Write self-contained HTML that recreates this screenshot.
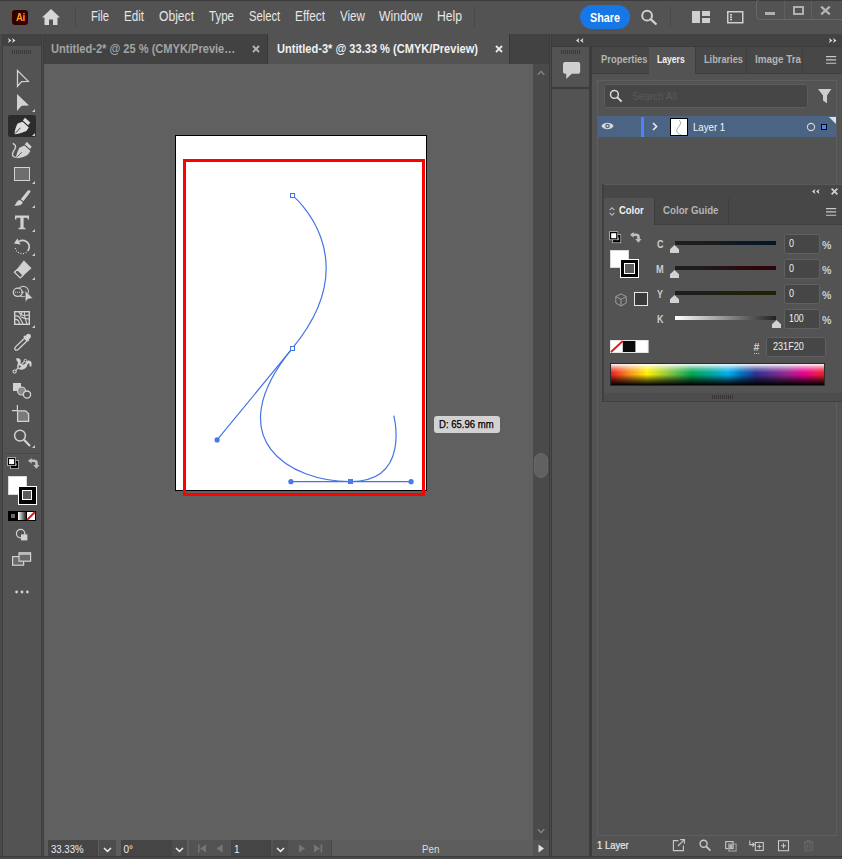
<!DOCTYPE html>
<html>
<head>
<meta charset="utf-8">
<title>Adobe Illustrator</title>
<style>
*{box-sizing:border-box;margin:0;padding:0}
html,body{width:842px;height:859px;overflow:hidden;background:#535353}
body{font-family:"Liberation Sans",sans-serif;font-size:12px;color:#dcdcdc;position:relative}
.abs{position:absolute}
svg{position:absolute;overflow:visible}
#menubar{left:0;top:0;width:842px;height:34px;background:#535353}
.menu{position:absolute;top:8px;font-size:14px;line-height:16px;color:#e6e6e6;white-space:nowrap;transform-origin:0 50%;display:inline-block}
.tab{position:absolute;top:0;height:30px}
.tabt{position:absolute;top:42px;font-size:12.5px;line-height:14px;font-weight:bold;white-space:nowrap;transform-origin:0 50%;transform:scaleX(.886)}
.ptab{position:absolute;font-size:10px;line-height:12px;font-weight:bold;color:#b4b4b4;white-space:nowrap;transform-origin:0 50%}
.lbl{position:absolute;font-size:10px;line-height:12px;font-weight:bold;color:#cdcdcd;white-space:nowrap;transform-origin:0 50%}
.vbox{position:absolute;background:#464646;border:1px solid #616161;border-radius:2.5px}
.vt{position:absolute;left:4px;top:3.5px;font-size:10px;line-height:12px;color:#f0f0f0;white-space:nowrap;transform-origin:0 50%;display:inline-block}
.sfield{position:absolute;top:840px;height:16px;background:#454545;white-space:nowrap}
.st{position:absolute;left:3px;top:3.6px;font-size:10px;line-height:12px;color:#ececec;transform-origin:0 50%;display:inline-block}
.tri{position:absolute;width:0;height:0;margin:0.5px 0 0 0.5px;border-left:3.5px solid transparent;border-bottom:3.5px solid #cfcfcf}
</style>
</head>
<body>
<!-- ================= MENUBAR ================= -->
<div id="menubar" class="abs">
  <div class="abs" style="left:0;top:0;width:842px;height:1px;background:#3c3c3c"></div>
  <div class="abs" style="left:12.3px;top:10px;width:16px;height:14.6px;background:#330000;border-radius:3px"></div>
  <div class="abs" style="left:15.8px;top:11.9px;font-size:10px;font-weight:bold;color:#ff9f1a;letter-spacing:-0.2px;line-height:12px;transform-origin:0 50%;transform:scaleX(.94)">Ai</div>
  <svg style="left:41px;top:8px" width="20" height="18" viewBox="0 0 20 18"><path d="M10 1 L1 9.5 H3.5 V17 H8 V11.5 H12 V17 H16.5 V9.5 H19 Z" fill="#d6d6d6"/></svg>
  <div class="abs" style="left:75px;top:7px;width:1px;height:20px;background:#484848"></div>
  <span class="menu" style="left:91px;transform:scaleX(0.8)">File</span>
  <span class="menu" style="left:124px;transform:scaleX(0.83)">Edit</span>
  <span class="menu" style="left:159px;transform:scaleX(0.865)">Object</span>
  <span class="menu" style="left:209px;transform:scaleX(0.825)">Type</span>
  <span class="menu" style="left:249px;transform:scaleX(0.8)">Select</span>
  <span class="menu" style="left:295px;transform:scaleX(0.845)">Effect</span>
  <span class="menu" style="left:340px;transform:scaleX(0.83)">View</span>
  <span class="menu" style="left:379px;transform:scaleX(0.87)">Window</span>
  <span class="menu" style="left:437px;transform:scaleX(0.87)">Help</span>
  <div class="abs" style="left:474px;top:7px;width:1px;height:20px;background:#484848"></div>
  <!-- share -->
  <div class="abs" style="left:580px;top:5px;width:50px;height:24px;border-radius:12px;background:#1877e6"></div><span class="menu" style="left:589.6px;top:9.5px;font-size:13.5px;font-weight:bold;color:#fff;transform:scaleX(.80)">Share</span>
  <svg style="left:639px;top:8px" width="20" height="20" viewBox="0 0 20 20"><circle cx="8.1" cy="7.7" r="4.9" fill="none" stroke="#cfcfcf" stroke-width="2"/><path d="M11.6 11.2 L16.8 15.8" stroke="#cfcfcf" stroke-width="2.3" stroke-linecap="round"/></svg>
  <div class="abs" style="left:670px;top:7px;width:1px;height:20px;background:#484848"></div>
  <!-- arrange docs icon -->
  <svg style="left:692px;top:11px" width="18" height="13" viewBox="0 0 18 13"><rect x="0" y="0" width="8" height="12" fill="#cfcfcf"/><rect x="10" y="0" width="8" height="5" fill="#cfcfcf"/><rect x="10" y="7" width="8" height="5" fill="#cfcfcf"/></svg>
  <!-- workspace icon -->
  <svg style="left:727px;top:11px" width="17" height="13" viewBox="0 0 17 13"><rect x="0.75" y="0.75" width="15" height="11" fill="none" stroke="#cfcfcf" stroke-width="1.5"/><rect x="3" y="3" width="2" height="1.6" fill="#cfcfcf"/><rect x="3" y="5.4" width="2" height="1.6" fill="#cfcfcf"/><rect x="3" y="7.8" width="2" height="1.6" fill="#cfcfcf"/></svg>
  <!-- window controls -->
  <div class="abs" style="left:756px;top:-1px;width:90px;height:21px;border:1px solid #676767;border-radius:4px"></div><div class="abs" style="left:784px;top:1px;width:1px;height:18px;background:#606060"></div><div class="abs" style="left:811px;top:1px;width:1px;height:18px;background:#606060"></div>
  <div class="abs" style="left:765px;top:12px;width:10px;height:3px;background:#b0b0b0"></div>
  <div class="abs" style="left:793px;top:6px;width:11px;height:9px;border:2px solid #b0b0b0"></div>
  <svg style="left:820px;top:6px" width="11" height="9" viewBox="0 0 11 9"><path d="M1.2 0.6 L9.8 8.4 M9.8 0.6 L1.2 8.4" stroke="#b4b4b4" stroke-width="2.2"/></svg>
</div>

<!-- ================= TOOLBAR ================= -->
<div class="abs" style="left:0;top:34px;width:3px;height:825px;background:#4a4a4a"></div>
<div class="abs" style="left:2px;top:34px;width:1px;height:825px;background:#3e3e3e"></div>
<div class="abs" style="left:3px;top:34px;width:39px;height:12px;background:#424242"></div>
<div class="abs" style="left:41px;top:34px;width:3px;height:825px;background:#3e3e3e"></div>
<div class="abs" style="left:42px;top:34px;width:1px;height:825px;background:#4a4a4a"></div>
<!-- >> -->
<svg style="left:7.7px;top:38.2px" width="7.5" height="5" viewBox="0 0 7.5 5"><path d="M0 0 L3.4 2.5 L0 5 L0.9 2.5 Z M4.1 0 L7.5 2.5 L4.1 5 L5 2.5 Z" fill="#e0e0e0"/></svg>
<!-- grip -->
<div class="abs" style="left:12px;top:50px;width:19px;height:4px;background:repeating-linear-gradient(90deg,#3a3a3a 0,#3a3a3a 1px,transparent 1px,transparent 2px)"></div>

<!-- selection tool -->
<svg style="left:10px;top:66px" width="24" height="24" viewBox="0 0 24 24"><path d="M7.5 4.5 L7.5 20.2 L11.6 15.6 L18.3 15.3 Z" fill="none" stroke="#d2d2d2" stroke-width="1.3" stroke-linejoin="miter"/></svg>
<!-- direct selection -->
<svg style="left:10px;top:90px" width="24" height="24" viewBox="0 0 24 24"><path d="M7 4 L7 21 L11.6 15.8 L19 15.4 Z" fill="#d2d2d2"/></svg>
<div class="tri" style="left:31px;top:108px"></div>
<!-- pen (active) -->
<div class="abs" style="left:8px;top:115px;width:28px;height:22px;background:#2c2c2c;border-radius:2px"></div>
<svg style="left:10px;top:114px" width="24" height="24" viewBox="0 0 24 24"><g fill="#dedede"><path d="M4.5 19.4 C4.9 16 6 12 7.6 9.4 L12.6 7.7 L18.8 13.4 L16.4 17 C13 18.6 9 19.8 5.4 20.2 Z"/><path d="M15 3.8 L20.3 8.6 L18.1 11.3 L12.9 6.5 Z"/></g><path d="M5.2 19.4 L10.4 13.8" stroke="#2c2c2c" stroke-width="0.9"/></svg>
<div class="tri" style="left:31px;top:132px"></div>
<!-- curvature -->
<svg style="left:10px;top:138px" width="24" height="24" viewBox="0 0 24 24"><g fill="#d2d2d2"><path d="M5.9 19.6 C6.6 16 7.8 12.4 9.4 9.7 L14.4 7.5 L20.5 12.9 L17.8 16.7 C15 18.4 11.6 19.6 7.2 20.2 Z"/><path d="M16.9 3.9 L21.7 8.7 L20 11 L14.7 6.2 Z"/></g><path d="M6.8 19.4 L11.8 14.2" stroke="#535353" stroke-width="0.9"/><path d="M2.8 5.3 C4.5 6.3 5.8 7 5.6 9 C5 12 2 14 2.5 17 C2.8 18.6 4 19.2 5.8 19.4" fill="none" stroke="#d2d2d2" stroke-width="1.3"/></svg>
<!-- rectangle -->
<div class="abs" style="left:14px;top:167px;width:16px;height:14px;border:1.5px solid #d2d2d2;background:#6e6e6e"></div>
<div class="tri" style="left:31px;top:180px"></div>
<!-- paintbrush -->
<svg style="left:10px;top:186px" width="24" height="24" viewBox="0 0 24 24"><path d="M19.4 4.2 C20.6 4.4 20.6 5.6 20 6.6 L13.4 15.2 L10.8 13.2 L17.6 4.8 C18.2 4.2 18.8 4 19.4 4.2 Z" fill="#d2d2d2"/><path d="M10 14 L12.6 16 C12.6 18.6 10.6 19.8 4 19.8 C6.4 18.6 6 14.6 10 14 Z" fill="#d2d2d2"/></svg>
<div class="tri" style="left:31px;top:204px"></div>
<!-- type -->
<svg style="left:10px;top:210px" width="24" height="24" viewBox="0 0 24 24"><path d="M5 5.6 H19 V9.4 H17.6 V7.8 H13.6 V17.8 H15.4 V19.2 H8.6 V17.8 H10.4 V7.8 H6.4 V9.4 H5 Z" fill="#d2d2d2"/></svg>
<div class="tri" style="left:31px;top:228px"></div>
<!-- rotate -->
<svg style="left:10px;top:234px" width="24" height="24" viewBox="0 0 24 24"><path d="M9 7.4 C14 4.6 19.6 8.4 19.2 13.2 C19 15 18.4 16.2 17.6 17" fill="none" stroke="#d2d2d2" stroke-width="1.6"/><path d="M4 9.6 L7.4 4.4 L10.6 10.6 Z" fill="#d2d2d2"/><path d="M5.4 14 C6 18 10 20.4 14 19.4 C15.4 19 16.4 18.4 17.2 17.6" fill="none" stroke="#d2d2d2" stroke-width="1.2" stroke-dasharray="1 1.6"/></svg>
<div class="tri" style="left:31px;top:252px"></div>
<!-- eraser -->
<svg style="left:10px;top:258px" width="24" height="24" viewBox="0 0 24 24"><path d="M13.9 2.7 L21.2 10.2 L13.3 17.3 L7.2 11.2 Z" fill="#d2d2d2" stroke="#d2d2d2" stroke-width="0.6" stroke-linejoin="round"/><path d="M7.3 11.4 L13.1 17.2 L10.2 19.9 L4.4 14.3 Z" fill="none" stroke="#d2d2d2" stroke-width="1.3" stroke-linejoin="round"/></svg>
<div class="tri" style="left:31px;top:276px"></div>
<!-- retype/touch type: bubble + arrow -->
<svg style="left:10px;top:282px" width="24" height="24" viewBox="0 0 24 24"><ellipse cx="13.2" cy="9.6" rx="5.3" ry="5.2" fill="none" stroke="#c4c4c4" stroke-width="1.1"/><ellipse cx="7.8" cy="10.3" rx="4.5" ry="4.1" fill="#535353" stroke="#d2d2d2" stroke-width="1.3"/><path d="M4.8 10.3 H14.4" stroke="#d8d8d8" stroke-width="1.1" stroke-dasharray="1 1.1"/><path d="M15.2 8.4 V20.4 L18 17.1 L23 16.4 Z" fill="#d2d2d2" stroke="#535353" stroke-width="0.7"/></svg>
<!-- mesh -->
<svg style="left:10px;top:307px" width="24" height="24" viewBox="0 0 24 24"><rect x="4.7" y="4.7" width="14.6" height="12.6" fill="none" stroke="#d2d2d2" stroke-width="1.4"/><g fill="none" stroke="#d2d2d2" stroke-width="1.1"><path d="M5 9 C9 8 10 11 13 17"/><path d="M5 12.4 C8 12 9 14 9.6 17"/><path d="M9 5 C10 8 14 9 19 8"/><path d="M14.6 5 C13.6 9 16 13 17 17"/><path d="M11 10 C14 11 16 12 19 12"/><path d="M12 5 C11.6 7 11 8.6 10 9.6"/></g></svg>
<div class="tri" style="left:31px;top:324px"></div>
<!-- eyedropper -->
<svg style="left:10px;top:330px" width="24" height="24" viewBox="0 0 24 24"><path d="M14.6 8.2 L17.2 10.8 L8.8 19 C7.6 20 6 20.4 5.2 19.7 C4.4 18.8 5 17.4 6 16.4 Z" fill="none" stroke="#d2d2d2" stroke-width="1.3"/><path d="M13.2 6.8 L14.6 5.6 L15.4 6.2 C16 4.2 18.6 2.8 20.2 4.4 C21.8 6 20.6 8.4 18.6 9.2 L19.4 10.2 L18 11.6 Z" fill="#d2d2d2"/></svg>
<!-- symbol sprayer -->
<svg style="left:10px;top:354px" width="24" height="24" viewBox="0 0 24 24"><path d="M6 4.6 C9.6 3 11.8 6 10.4 9.4 C12.4 11.6 15 10.6 16 8.4 C17.6 5.4 21.6 6.4 21.6 9.8 L21.4 12.6 L19.6 12.4 L19.4 10 C18.8 9.2 17.8 9.6 17.6 10.6 C16.6 14.6 13.6 16.4 10 15.6 C7.6 15 6.6 13 7.4 11 C8 9.4 8.4 7.8 6.8 7 Z" fill="#d2d2d2"/><path d="M4.6 17.6 L15.4 6.4" stroke="#d2d2d2" stroke-width="1.2"/><circle cx="4.6" cy="17.6" r="1.6" fill="#535353" stroke="#d2d2d2" stroke-width="1.1"/><circle cx="15.4" cy="6.6" r="1.3" fill="#535353" stroke="#d2d2d2" stroke-width="1"/><circle cx="9.6" cy="12.6" r="1.6" fill="#535353" stroke="#d2d2d2" stroke-width="1"/></svg>
<!-- shape builder -->
<svg style="left:10px;top:378px" width="24" height="24" viewBox="0 0 24 24"><rect x="3" y="5" width="8" height="8" fill="#d2d2d2"/><circle cx="11.6" cy="13" r="4" fill="#8a8a8a" stroke="#d2d2d2" stroke-width="1.2"/><circle cx="17" cy="16.6" r="3.6" fill="#535353" stroke="#d2d2d2" stroke-width="1.3"/></svg>
<!-- artboard -->
<svg style="left:10px;top:402px" width="24" height="24" viewBox="0 0 24 24"><path d="M7.4 3 V8.6 M2 8.6 H7.4" stroke="#d2d2d2" stroke-width="1.2" fill="none"/><path d="M7.6 8.8 H15.6 L18.6 11.8 V19.4 H7.6 Z" fill="#7a7a7a" stroke="#d2d2d2" stroke-width="1.3"/></svg>
<!-- zoom -->
<svg style="left:10px;top:426px" width="24" height="24" viewBox="0 0 24 24"><circle cx="10" cy="9.6" r="5.4" fill="none" stroke="#d2d2d2" stroke-width="1.5"/><path d="M14 13.8 L20 20" stroke="#d2d2d2" stroke-width="2.2"/></svg>
<div class="tri" style="left:31px;top:444px"></div>
<!-- separator -->
<div class="abs" style="left:6px;top:453px;width:33px;height:1px;background:#474747"></div>
<!-- default fill/stroke -->
<svg style="left:6px;top:456px" width="14" height="14" viewBox="6 456 14 14">
  <rect x="10.1" y="460.1" width="8.8" height="8.8" fill="#c8c8c8"/>
  <rect x="10.8" y="460.8" width="7.4" height="7.4" fill="#000"/>
  <path d="M15.4 465.6 H16 V463.4" fill="none" stroke="#fff" stroke-width="0.9"/>
  <rect x="7.3" y="457.3" width="8.6" height="8.6" fill="#c8c8c8"/>
  <rect x="8" y="458" width="7.2" height="7.2" fill="#000"/>
  <rect x="9.1" y="459.1" width="5" height="5" fill="#fff"/>
</svg>
<!-- swap -->
<svg style="left:27.6px;top:458px" width="12" height="11" viewBox="0 0 12 11"><path d="M0 2.8 L3.6 0 V1.6 H6 C8.6 1.6 9.8 3 9.8 5 V7 H11.6 L8.4 10.8 L5.2 7 H7.2 V5.2 C7.2 4.4 6.8 4 6 4 H3.6 V5.8 Z" fill="#bdbdbd"/></svg>
<!-- fill / stroke -->
<div class="abs" style="left:7.5px;top:475.5px;width:19px;height:19px;background:#fff;border:1px solid #d8d8d8"></div>
<div class="abs" style="left:17.5px;top:485.5px;width:19px;height:19px;background:#fff"></div>
<div class="abs" style="left:18.5px;top:486.5px;width:17px;height:17px;background:#000"></div>
<div class="abs" style="left:22px;top:490px;width:10px;height:10px;background:#fff"></div>
<div class="abs" style="left:23px;top:491px;width:8px;height:8px;background:#5c5c5c"></div>
<!-- color / gradient / none -->
<div class="abs" style="left:8px;top:511px;width:28px;height:10px;background:#000"></div>
<div class="abs" style="left:11px;top:514px;width:4px;height:4px;background:#6a6a6a"></div>
<div class="abs" style="left:18px;top:512px;width:8px;height:8px;background:linear-gradient(90deg,#fff,#222)"></div>
<svg style="left:27px;top:512px" width="8" height="8" viewBox="0 0 8 8"><rect width="8" height="8" fill="#fff"/><path d="M0 8 L8 0" stroke="#e8131a" stroke-width="2"/></svg>
<!-- draw mode -->
<svg style="left:14px;top:527px" width="16" height="16" viewBox="0 0 16 16"><circle cx="6.6" cy="6.6" r="4.2" fill="none" stroke="#d2d2d2" stroke-width="1.2"/><rect x="7" y="7.4" width="6.4" height="6" fill="#d2d2d2"/></svg>
<!-- screen mode -->
<svg style="left:12px;top:552px" width="20" height="14" viewBox="0 0 20 14"><rect x="0.6" y="4.6" width="11" height="8.6" fill="#6a6a6a" stroke="#d2d2d2" stroke-width="1.2"/><rect x="7" y="0.8" width="11.6" height="8.4" fill="#6a6a6a" stroke="#d2d2d2" stroke-width="1.2"/><path d="M7 2 H18.6" stroke="#d2d2d2" stroke-width="1.4"/></svg>
<!-- more -->
<svg style="left:15px;top:590px" width="14" height="4" viewBox="0 0 14 4"><circle cx="1.6" cy="2" r="1.4" fill="#d2d2d2"/><circle cx="7" cy="2" r="1.4" fill="#d2d2d2"/><circle cx="12.4" cy="2" r="1.4" fill="#d2d2d2"/></svg>

<!-- ================= TABBAR ================= -->
<div class="abs" style="left:44px;top:34px;width:505px;height:30px;background:#424242"></div>
<div class="tabt" style="left:51px;color:#a2a2a2">Untitled-2* @ 25 % (CMYK/Previe…</div>
<svg style="left:252px;top:45px" width="8" height="8" viewBox="0 0 8 8"><path d="M1 1 L7 7 M7 1 L1 7" stroke="#b8b8b8" stroke-width="1.8"/></svg>
<div class="abs" style="left:267px;top:34px;width:1px;height:30px;background:#383838"></div>
<div class="tab" style="left:268px;top:34px;width:241px;background:#535353"></div><div class="tabt" style="left:276.5px;color:#f0f0f0">Untitled-3* @ 33.33 % (CMYK/Preview)</div>
<svg style="left:495px;top:45px" width="8" height="8" viewBox="0 0 8 8"><path d="M1 1 L7 7 M7 1 L1 7" stroke="#e8e8e8" stroke-width="1.8"/></svg>
<div class="abs" style="left:509px;top:34px;width:1px;height:30px;background:#383838"></div>

<!-- ================= CANVAS ================= -->
<div class="abs" style="left:44px;top:64px;width:489px;height:776px;background:#606060"></div>
<!-- artboard -->
<div class="abs" style="left:175px;top:135px;width:252px;height:356px;background:#fff;border:1px solid #000"></div>
<svg style="left:0;top:0" width="842" height="859" viewBox="0 0 842 859">
  <rect x="184.5" y="160.5" width="239" height="334" fill="none" stroke="#ff0000" stroke-width="3"/>
  <g fill="none" stroke="#4274e6" stroke-width="1.2">
    <path d="M292.6,195.6 C292.6,195.6 367.9,256.5 292.5,348.2 C217.1,439.9 290.9,481.9 350.5,481.6 C411.1,481.9 393.8,415.6 393.8,415.6"/>
    <path d="M292.5,348.2 L217.1,439.9"/>
    <path d="M290.9,481.6 H411.1"/>
  </g>
  <rect x="290.5" y="193.5" width="4" height="4" fill="#fff" stroke="#4274e6" stroke-width="1"/>
  <rect x="290.5" y="346.5" width="4" height="4" fill="#fff" stroke="#4274e6" stroke-width="1"/>
  <rect x="348" y="479" width="5" height="5" fill="#457af0"/>
  <circle cx="217.1" cy="439.9" r="2.6" fill="#457af0"/>
  <circle cx="290.9" cy="481.7" r="2.6" fill="#457af0"/>
  <circle cx="411.1" cy="481.7" r="2.6" fill="#457af0"/>
</svg>
<!-- measurement tooltip -->
<div class="abs" style="left:434px;top:416px;width:66px;height:17px;background:#d2d2d2;border-radius:3px"></div><div class="abs" style="left:439px;top:418.5px;color:#000;font-size:10px;line-height:12px;white-space:nowrap;-webkit-text-stroke:0.25px #000;transform-origin:0 50%;transform:scaleX(.955)">D: 65.96 mm</div>

<!-- vertical scrollbar -->
<div class="abs" style="left:533px;top:64px;width:16px;height:776px;background:#4a4a4a"></div>
<svg style="left:537px;top:70px" width="9" height="6" viewBox="0 0 10 6"><path d="M0.8 5 L4.5 1.2 L8.2 5" fill="none" stroke="#8e8e8e" stroke-width="1.3"/></svg>
<svg style="left:537px;top:828px" width="9" height="6" viewBox="0 0 10 6"><path d="M0.8 1 L4.5 4.8 L8.2 1" fill="none" stroke="#8e8e8e" stroke-width="1.3"/></svg>
<div class="abs" style="left:534.3px;top:452.8px;width:14.2px;height:25.2px;border-radius:7px;background:#616161;border:1px solid #696969"></div>
<div class="abs" style="left:549px;top:34px;width:3px;height:825px;background:#3c3c3c"></div><div class="abs" style="left:550px;top:34px;width:1px;height:825px;background:#4a4a4a"></div>

<!-- ================= STATUS BAR ================= -->
<div class="abs" style="left:44px;top:840px;width:505px;height:16px;background:#5d5d5d"></div>
<div class="abs" style="left:189px;top:840px;width:142px;height:16px;background:#535353"></div>
<div class="sfield" style="left:48px;width:50px"><span class="st" style="transform:scaleX(.96)">33.33%</span></div>
<div class="sfield" style="left:98.5px;width:17px;background:#4d4d4d"></div>
<svg style="left:102.5px;top:847px" width="9" height="6" viewBox="0 0 9 6"><path d="M1 1 L4.5 4.4 L8 1" fill="none" stroke="#e8e8e8" stroke-width="1.5"/></svg>
<div class="sfield" style="left:120.5px;width:51px"><span class="st">0°</span></div>
<div class="sfield" style="left:172px;width:15px;background:#4d4d4d"></div>
<svg style="left:175px;top:847px" width="9" height="6" viewBox="0 0 9 6"><path d="M1 1 L4.5 4.4 L8 1" fill="none" stroke="#e8e8e8" stroke-width="1.5"/></svg>
<svg style="left:197px;top:844px" width="30" height="9" viewBox="0 0 30 9"><g fill="#757575"><rect x="1" y="0.5" width="1.6" height="8"/><path d="M9 0.5 V8.5 L3 4.5 Z"/><path d="M25.6 0.5 V8.5 L19.4 4.5 Z"/></g></svg>
<div class="sfield" style="left:231px;width:40px"><span class="st">1</span></div>
<div class="sfield" style="left:272.5px;width:15.5px;background:#4d4d4d"></div>
<svg style="left:276px;top:847px" width="9" height="6" viewBox="0 0 9 6"><path d="M1 1 L4.5 4.4 L8 1" fill="none" stroke="#e8e8e8" stroke-width="1.5"/></svg>
<svg style="left:298px;top:844px" width="30" height="9" viewBox="0 0 30 9"><g fill="#757575"><path d="M1 0.5 V8.5 L7 4.5 Z"/><path d="M16 0.5 V8.5 L22 4.5 Z"/><rect x="22.6" y="0.5" width="1.6" height="8"/></g></svg>
<div class="abs" style="left:331px;top:840px;width:1px;height:16px;background:#484848"></div>
<div class="abs" style="left:422px;top:843.6px;font-size:10px;line-height:12px;color:#dcdcdc;transform-origin:0 50%;transform:scaleX(.98)">Pen</div>
<div class="abs" style="left:533px;top:840px;width:16px;height:16px;background:#535353"></div>
<svg style="left:538px;top:844px" width="6" height="9" viewBox="0 0 6 9"><path d="M0.5 0.5 V8.5 L6 4.5 Z" fill="#e0e0e0"/></svg>
<!-- ================= RIGHT DOCK ================= -->
<div class="abs" style="left:552px;top:34px;width:290px;height:12px;background:#424242"></div>
<svg style="left:575.8px;top:38px" width="7.5" height="5" viewBox="0 0 7.5 5"><path d="M3.4 0 L0 2.5 L3.4 5 L2.5 2.5 Z M7.5 0 L4.1 2.5 L7.5 5 L6.6 2.5 Z" fill="#e0e0e0"/></svg>
<svg style="left:829px;top:38px" width="7.5" height="5" viewBox="0 0 7.5 5"><path d="M0 0 L3.4 2.5 L0 5 L0.9 2.5 Z M4.1 0 L7.5 2.5 L4.1 5 L5 2.5 Z" fill="#e0e0e0"/></svg>
<!-- collapsed column -->
<div class="abs" style="left:552px;top:46px;width:37px;height:813px;background:#535353"></div><div class="abs" style="left:552px;top:46px;width:290px;height:1px;background:#3c3c3c"></div>
<div class="abs" style="left:561px;top:50px;width:19px;height:4px;background:repeating-linear-gradient(90deg,#3a3a3a 0,#3a3a3a 1px,transparent 1px,transparent 2px)"></div>
<svg style="left:563px;top:61.7px" width="17.2" height="17.2" viewBox="0 0 17.2 17.2"><path d="M2 0 H15.2 Q17.2 0 17.2 2 V9.8 Q17.2 11.8 15.2 11.8 H8.8 L3.2 17.1 V11.8 H2 Q0 11.8 0 9.8 V2 Q0 0 2 0 Z" fill="#cfcfcf"/></svg>
<div class="abs" style="left:552px;top:87px;width:37px;height:1.5px;background:#3c3c3c"></div>
<div class="abs" style="left:589px;top:46px;width:3px;height:813px;background:#3c3c3c"></div>

<!-- Layers panel group -->
<div class="abs" style="left:592px;top:47px;width:250px;height:26px;background:#474747"></div><div class="abs" style="left:592px;top:73px;width:250px;height:1px;background:#3e3e3e"></div>
<div class="abs" style="left:592px;top:74px;width:250px;height:785px;background:#535353"></div>
<div class="ptab" style="left:601px;top:53.5px;transform:scaleX(0.94)">Properties</div>
<div class="abs" style="left:649px;top:47px;width:47px;height:27px;background:#535353;border-right:1px solid #3e3e3e"></div>
<div class="ptab" style="left:657px;top:53.5px;color:#f2f2f2;transform:scaleX(0.86)">Layers</div>
<div class="ptab" style="left:704px;top:53.5px;transform:scaleX(0.92)">Libraries</div>
<div class="abs" style="left:746px;top:46px;width:1px;height:27px;background:#3e3e3e"></div>
<div class="ptab" style="left:755px;top:53.5px;transform:scaleX(0.987)">Image Tra</div>
<div class="abs" style="left:802px;top:46px;width:1px;height:27px;background:#3e3e3e"></div>
<svg style="left:826px;top:56.4px" width="10.2" height="8" viewBox="0 0 10.2 8"><path d="M0 0.6 H10.2 M0 3.9 H10.2 M0 7.2 H10.2" stroke="#c8c8c8" stroke-width="1.1"/></svg>

<!-- layers content box -->
<div class="abs" style="left:597px;top:80px;width:240px;height:756px;border:1px solid #5e5e5e"></div>
<!-- search -->
<div class="abs" style="left:603.6px;top:84px;width:204px;height:23.6px;background:#464646;border:1px solid #5c5c5c;border-radius:2.5px"></div>
<svg style="left:609px;top:89px" width="14" height="14" viewBox="0 0 14 14"><circle cx="5.4" cy="5.4" r="3.9" fill="none" stroke="#d8d8d8" stroke-width="1.5"/><path d="M8.4 8.4 L12.6 12.6" stroke="#d8d8d8" stroke-width="2"/></svg>
<div class="abs" style="left:632px;top:89.5px;font-size:10.5px;line-height:12px;color:#5a5a5a;transform-origin:0 50%;transform:scaleX(.95)">Search All</div>
<svg style="left:817.8px;top:89.2px" width="13.4" height="14.4" viewBox="0 0 13.4 14.4"><path d="M0 0 H13.4 L9 6.4 V14.2 L5 11.4 V6.4 Z" fill="#cdcdcd"/></svg>
<!-- layer row -->
<div class="abs" style="left:598px;top:116px;width:238px;height:21px;background:#4b6483"></div>

<svg style="left:601px;top:121.3px" width="13" height="10" viewBox="0 0 14 10"><path d="M0.4 5 C3 0.4 11 0.4 13.6 5 C11 9.6 3 9.6 0.4 5 Z" fill="#d6d6d6"/><circle cx="7" cy="5" r="2.4" fill="#4b6483"/><circle cx="7" cy="5" r="1.1" fill="#d6d6d6"/></svg>
<div class="abs" style="left:641px;top:116.5px;width:3px;height:20px;background:#4f80ff"></div>
<svg style="left:652px;top:122.3px" width="6" height="9" viewBox="0 0 6 9"><path d="M1 1 L4.6 4.5 L1 8" fill="none" stroke="#f0f0f0" stroke-width="1.5"/></svg>
<div class="abs" style="left:670px;top:118px;width:18px;height:18px;background:#fff;border:1px solid #000"></div>
<svg style="left:670px;top:118px" width="18" height="18" viewBox="0 0 18 18"><path d="M9.2,2.1 C10.4,3.4 11,4.2 10.4,6 C9.6,8.4 6.8,10.4 6.6,12.6 C6.5,14.6 8.4,16 10.9,16.6" fill="none" stroke="#8a8a8a" stroke-width="0.7"/></svg>
<div class="abs" style="left:693px;top:121.7px;font-size:10px;line-height:12px;color:#f6f6f6;transform-origin:0 50%;transform:scaleX(.965)">Layer 1</div>
<svg style="left:806px;top:121.5px" width="10" height="10" viewBox="0 0 10 10"><circle cx="5" cy="5" r="3.6" fill="none" stroke="#d6d6d6" stroke-width="1.1"/></svg>
<div class="abs" style="left:821px;top:124px;width:6.4px;height:6.4px;background:#4f80ff;border:1px solid #0a0a0a"></div>
<svg style="left:829px;top:117px" width="7" height="7" viewBox="0 0 7 7"><path d="M0 0 H7 V7 Z" fill="#e0e0e0"/></svg>

<!-- layers footer -->
<div class="abs" style="left:597.4px;top:839.6px;font-size:10px;line-height:12px;color:#e8e8e8;-webkit-text-stroke:0.2px #e8e8e8;transform-origin:0 50%;transform:scaleX(.95)">1 Layer</div>
<svg style="left:672px;top:837.5px" width="150" height="14" viewBox="0 0 150 14">
  <g fill="none" stroke="#c8c8c8" stroke-width="1.1">
    <path d="M6.4 2.6 H1.4 V12.6 H11.4 V7.6"/><path d="M6 8 L12.4 1.6 M8.2 1.6 H12.4 V5.8"/>
    <circle cx="31.6" cy="5.8" r="3.5" stroke-width="1.4"/><path d="M34.2 8.4 L38.4 12.6" stroke-width="1.7"/>
    <rect x="53.7" y="3.6" width="7.4" height="7"/>
    <rect x="56.7" y="6" width="7.4" height="7" stroke="#a0a0a0"/>
    <path d="M77.8 2.4 V6.6 H82.2 M80.4 4.6 L82.4 6.6 L80.4 8.6" stroke-width="1.1"/><rect x="83.3" y="4.5" width="8" height="8"/><path d="M87.3 6.4 V10.6 M85.2 8.5 H89.4" stroke-width="1"/>
    <rect x="106.5" y="2.7" width="10" height="10"/><path d="M111.5 5.2 V10.2 M109 7.7 H114"/>
  </g>
  <rect x="57.2" y="6.5" width="3.4" height="3.6" fill="#b4b4b4"/>
  <g fill="none" stroke="#6c6c6c" stroke-width="1"><path d="M131.5 4.2 H141.5 M134.8 4.2 V2.6 H138.2 V4.2 M132.8 4.2 V12.7 H140.2 V4.2 M135.2 6 V11 M137.8 6 V11"/></g>
</svg>

<!-- ================= COLOR PANEL (floating) ================= -->
<div class="abs" style="left:602px;top:184px;width:240px;height:218px;background:#404040"></div>
<div class="abs" style="left:604px;top:184px;width:238px;height:1px;background:#5a5a5a"></div>
<div class="abs" style="left:604px;top:185px;width:238px;height:13px;background:#474747"></div>
<svg style="left:812px;top:188.8px" width="7.5" height="5" viewBox="0 0 7.5 5"><path d="M3.4 0 L0 2.5 L3.4 5 L2.5 2.5 Z M7.5 0 L4.1 2.5 L7.5 5 L6.6 2.5 Z" fill="#e0e0e0"/></svg>
<svg style="left:831px;top:188px" width="7" height="7" viewBox="0 0 7 7"><path d="M0.6 0.6 L6.4 6.4 M6.4 0.6 L0.6 6.4" stroke="#d0d0d0" stroke-width="1.7"/></svg>
<div class="abs" style="left:604px;top:198px;width:238px;height:195px;background:#535353"></div>
<div class="abs" style="left:654px;top:198px;width:188px;height:26px;background:#474747"></div>
<div class="abs" style="left:654px;top:224px;width:188px;height:1px;background:#3e3e3e"></div>
<div class="abs" style="left:654px;top:198px;width:1px;height:26px;background:#3e3e3e"></div>
<svg style="left:608.5px;top:206.5px" width="6" height="9" viewBox="0 0 6 9"><path d="M0.6 3.2 L3 0.8 L5.4 3.2 M0.6 5.8 L3 8.2 L5.4 5.8" fill="none" stroke="#b8b8b8" stroke-width="1.1"/></svg>
<div class="ptab" style="left:619px;top:204.5px;color:#f2f2f2;transform:scaleX(.946)">Color</div>
<div class="ptab" style="left:663px;top:204.5px;transform:scaleX(.97)">Color Guide</div>
<div class="abs" style="left:728px;top:198px;width:1px;height:26px;background:#3e3e3e"></div>
<svg style="left:826px;top:207.6px" width="10.2" height="8" viewBox="0 0 10.2 8"><path d="M0 0.6 H10.2 M0 3.9 H10.2 M0 7.2 H10.2" stroke="#c8c8c8" stroke-width="1.1"/></svg>

<!-- default / swap -->
<svg style="left:608px;top:230px" width="14" height="14" viewBox="6 456 14 14">
  <rect x="10.3" y="460.3" width="8.8" height="8.8" fill="#c8c8c8"/>
  <rect x="11" y="461" width="7.4" height="7.4" fill="#000"/>
  <path d="M15.6 465.8 H16.2 V463.6" fill="none" stroke="#fff" stroke-width="0.9"/>
  <rect x="7.3" y="457.3" width="8.8" height="8.8" fill="#c8c8c8"/>
  <rect x="8" y="458" width="7.4" height="7.4" fill="#000"/>
  <rect x="9.2" y="459.2" width="5" height="5" fill="#fff"/>
</svg>
<svg style="left:630px;top:232px" width="12" height="11" viewBox="0 0 12 11"><path d="M0 2.8 L3.6 0 V1.6 H6 C8.6 1.6 9.8 3 9.8 5 V7 H11.6 L8.4 10.8 L5.2 7 H7.2 V5.2 C7.2 4.4 6.8 4 6 4 H3.6 V5.8 Z" fill="#bdbdbd"/></svg>
<!-- fill/stroke -->
<div class="abs" style="left:609.5px;top:249.5px;width:19px;height:18.5px;background:#fff;border:1px solid #d8d8d8"></div>
<div class="abs" style="left:620px;top:259px;width:19px;height:19px;background:#fff"></div>
<div class="abs" style="left:621px;top:260px;width:17px;height:17px;background:#000"></div>
<div class="abs" style="left:624px;top:263px;width:11px;height:11px;background:#fff"></div>
<div class="abs" style="left:625px;top:264px;width:9px;height:9px;background:#5c5c5c"></div>
<!-- cube & dark square -->
<svg style="left:614.5px;top:293px" width="12" height="14" viewBox="0 0 12 14"><path d="M6 0.8 L11.2 3.6 V10 L6 13 L0.8 10 V3.6 Z M0.8 3.6 L6 6.4 L11.2 3.6 M6 6.4 V13" fill="none" stroke="#9c9c9c" stroke-width="1"/></svg>
<div class="abs" style="left:634px;top:292px;width:14px;height:14px;background:#3a3a3a;border:1px solid #e6e6e6"></div>

<!-- sliders -->
<div class="lbl" style="left:656.5px;top:239px;transform:scaleX(.9)">C</div>
<div class="lbl" style="left:656px;top:264px;transform:scaleX(.92)">M</div>
<div class="lbl" style="left:656.5px;top:289px;transform:scaleX(.9)">Y</div>
<div class="lbl" style="left:656.5px;top:314px;transform:scaleX(.9)">K</div>
<div class="abs" style="left:675px;top:241.3px;width:101px;height:3.7px;background:linear-gradient(90deg,#1e1e1e 0%,#1c1c1e 30%,#0a1828 70%,#071424 100%)"></div>
<div class="abs" style="left:675px;top:266.3px;width:101px;height:3.7px;background:linear-gradient(90deg,#1e1e1e 0%,#1f1a1c 30%,#2e060e 70%,#2c050c 100%)"></div>
<div class="abs" style="left:675px;top:291.3px;width:101px;height:3.7px;background:linear-gradient(90deg,#1e1e1e 0%,#1e1e1a 30%,#222006 70%,#201e04 100%)"></div>
<div class="abs" style="left:675px;top:316.3px;width:101px;height:3.7px;background:linear-gradient(90deg,#fff,#222)"></div>
<svg style="left:670px;top:245px" width="9" height="8" viewBox="0 0 9 8"><path d="M4.5 0 L9 4.2 V8 H0 V4.2 Z" fill="#d2d2d2"/></svg>
<svg style="left:670px;top:270px" width="9" height="8" viewBox="0 0 9 8"><path d="M4.5 0 L9 4.2 V8 H0 V4.2 Z" fill="#d2d2d2"/></svg>
<svg style="left:670px;top:295px" width="9" height="8" viewBox="0 0 9 8"><path d="M4.5 0 L9 4.2 V8 H0 V4.2 Z" fill="#d2d2d2"/></svg>
<svg style="left:771.5px;top:320px" width="9" height="8" viewBox="0 0 9 8"><path d="M4.5 0 L9 4.2 V8 H0 V4.2 Z" fill="#d2d2d2"/></svg>
<div class="vbox" style="left:784px;top:233.5px;width:36px;height:20px"><span class="vt" style="transform:scaleX(.9)">0</span></div>
<div class="vbox" style="left:784px;top:258.5px;width:36px;height:20px"><span class="vt" style="transform:scaleX(.9)">0</span></div>
<div class="vbox" style="left:784px;top:283.5px;width:36px;height:20px"><span class="vt" style="transform:scaleX(.9)">0</span></div>
<div class="vbox" style="left:784px;top:308.5px;width:36px;height:20px"><span class="vt" style="transform:scaleX(.88)">100</span></div>
<div class="lbl" style="left:822px;top:240px;transform:scaleX(1.06)">%</div>
<div class="lbl" style="left:822px;top:265px;transform:scaleX(1.06)">%</div>
<div class="lbl" style="left:822px;top:290px;transform:scaleX(1.06)">%</div>
<div class="lbl" style="left:822px;top:315px;transform:scaleX(1.06)">%</div>

<!-- none/black/white -->
<svg style="left:609.5px;top:339.5px" width="40" height="14" viewBox="0 0 40 14"><rect x="0.5" y="0.5" width="37.6" height="12" fill="#fff" stroke="#e6e6e6"/><rect x="12.8" y="1" width="12.6" height="11" fill="#0a0a0a"/><path d="M1 12 L12.8 1" stroke="#e8131a" stroke-width="1.8"/></svg>
<div class="lbl" style="left:753.5px;top:341px;border-bottom:1px dotted #c8c8c8;line-height:12px;font-weight:bold;font-size:10.5px">#</div>
<div class="vbox" style="left:766px;top:336.5px;width:60px;height:20px"><span class="vt" style="left:5.5px;transform:scaleX(.91)">231F20</span></div>
<!-- spectrum -->
<div class="abs" style="left:610px;top:363px;width:215px;height:23px;border:1px solid #2a2a2a;background:linear-gradient(180deg,rgba(255,255,255,.95) 0%,rgba(255,255,255,.35) 22%,rgba(255,255,255,0) 42%,rgba(0,0,0,0) 50%,rgba(0,0,0,.55) 75%,rgba(0,0,0,1) 100%),linear-gradient(90deg,#ed1c24 0%,#f7941d 9%,#fff200 17%,#8dc63f 27%,#00a651 38%,#00a99d 47%,#00aeef 55%,#0072bc 61%,#2e3192 68%,#662d91 76%,#92278f 82%,#ec008c 91%,#ed145b 96%,#ed1c24 100%)"></div>
<!-- panel bottom -->
<div class="abs" style="left:604px;top:393px;width:238px;height:8px;background:#4d4d4d"></div>
<div class="abs" style="left:712px;top:395px;width:21px;height:4px;background:repeating-linear-gradient(90deg,#363636 0,#363636 1px,transparent 1px,transparent 2px)"></div>
<div class="abs" style="left:0;top:856px;width:842px;height:1px;background:#3a3a3a"></div><div class="abs" style="left:0;top:857px;width:842px;height:2px;background:#4a4a4a"></div>
</body>
</html>
